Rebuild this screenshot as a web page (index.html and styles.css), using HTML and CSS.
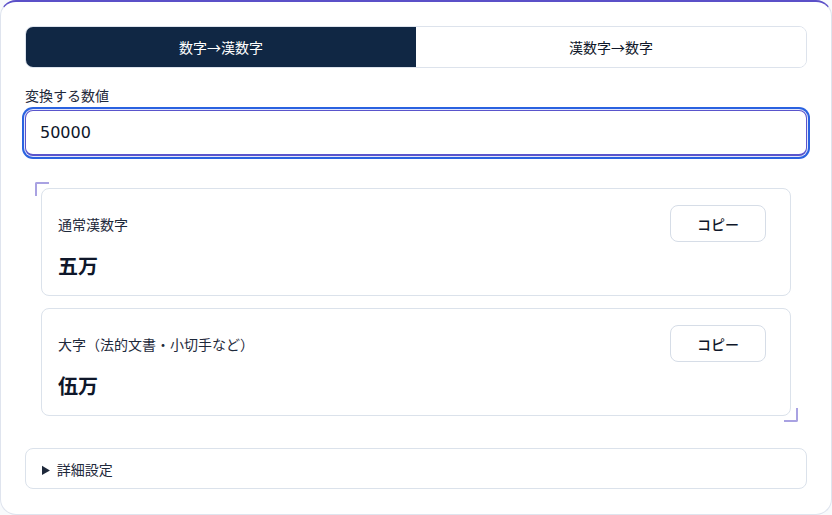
FILE: index.html
```html
<!DOCTYPE html>
<html lang="ja">
<head>
<meta charset="utf-8">
<title>漢数字変換</title>
<link rel="stylesheet" href="styles.css">
</head>
<body>
<div class="card">
  <div class="tabs">
    <button class="tab active">数字→漢数字</button>
    <button class="tab">漢数字→数字</button>
  </div>
  <label class="field-label" for="num">変換する数値</label>
  <input id="num" class="num-input" type="text" value="50000">
  <div class="results">
    <div class="result-list">
      <span class="corner corner-tl"></span>
      <span class="corner corner-br"></span>
      <div class="result">
        <div class="result-head">
          <span class="result-label">通常漢数字</span>
          <button class="copy">コピー</button>
        </div>
        <div class="result-value">五万</div>
      </div>
      <div class="result">
        <div class="result-head">
          <span class="result-label">大字（法的文書・小切手など）</span>
          <button class="copy">コピー</button>
        </div>
        <div class="result-value">伍万</div>
      </div>
    </div>
  </div>
  <details class="settings">
    <summary>詳細設定</summary>
  </details>
</div>
</body>
</html>
```
FILE: styles.css
```css
* { box-sizing: border-box; }
html, body { margin: 0; padding: 0; background: #f8fafc; }
body {
  font-family: "DejaVu Sans", "Noto Sans CJK JP", sans-serif;
  color: #0f172a;
}
.card {
  min-height: 515px;
  background: #ffffff;
  border: 1px solid #dfe4ee;
  border-top: 2px solid #5b50c8;
  border-radius: 16px;
  padding: 24px;
  display: flex;
  flex-direction: column;
}
.tabs {
  display: flex;
  border: 1px solid #dde3ec;
  border-radius: 8px;
  overflow: hidden;
}
.tab {
  flex: 1;
  height: 40px;
  border: 0;
  background: #ffffff;
  font-family: "Noto Sans CJK JP", "DejaVu Sans", sans-serif;
  font-size: 14px;
  color: #0f172a;
  padding: 0;
}
.tab.active {
  background: #102744;
  color: #ffffff;
}
.field-label {
  display: block;
  margin-top: 17px;
  font-family: "Noto Sans CJK JP", sans-serif;
  font-size: 14px;
  line-height: 20px;
  color: #1e293b;
}
.num-input {
  margin-top: 5px;
  height: 46px;
  width: 100%;
  border: 1px solid #5a55cc;
  border-bottom: 2px solid #5a55cc;
  border-radius: 8px;
  padding: 0 14px;
  font-family: "DejaVu Sans", sans-serif;
  font-size: 16px;
  color: #0f172a;
  outline: none;
  box-shadow: 0 0 0 1px #e3e6fb, 0 0 0 3px #2a62e0;
}
.results {
  margin-top: 16px;
  padding: 16px;
}
.result-list {
  position: relative;
  display: flex;
  flex-direction: column;
  gap: 12px;
}
.corner {
  position: absolute;
  width: 14px;
  height: 14px;
  border-color: #a9a2e2;
  border-style: solid;
  border-width: 0;
}
.corner-tl {
  top: -6px;
  left: -6px;
  border-top-width: 2px;
  border-left-width: 2px;
  border-top-left-radius: 2px;
}
.corner-br {
  bottom: -6px;
  right: -7px;
  border-bottom-width: 2px;
  border-right-width: 2px;
  border-bottom-right-radius: 2px;
}
.result {
  border: 1px solid #dbe2eb;
  border-radius: 8px;
  padding: 16px 24px 16px 16px;
  background: #ffffff;
}
.result-head {
  display: flex;
  justify-content: space-between;
  align-items: center;
}
.result-label {
  font-family: "Noto Sans CJK JP", sans-serif;
  font-size: 14px;
  color: #1e293b;
}
.copy {
  height: 37px;
  width: 96px;
  border: 1px solid #d6dde7;
  border-radius: 8px;
  background: #ffffff;
  font-family: "Noto Sans CJK JP", sans-serif;
  font-size: 14px;
  font-weight: 500;
  color: #0f172a;
  padding: 0;
}
.result-value {
  margin-top: 10px;
  font-family: "Noto Sans CJK JP", sans-serif;
  font-size: 20px;
  font-weight: 700;
  line-height: 27px;
  color: #0f172a;
}
.settings {
  margin-top: 16px;
  border: 1px solid #dbe2eb;
  border-radius: 8px;
}
.settings summary {
  padding: 11px 16px 10px;
  font-family: "Noto Sans CJK JP", sans-serif;
  font-size: 14px;
  line-height: 18px;
  color: #1e293b;
  cursor: pointer;
}
```
